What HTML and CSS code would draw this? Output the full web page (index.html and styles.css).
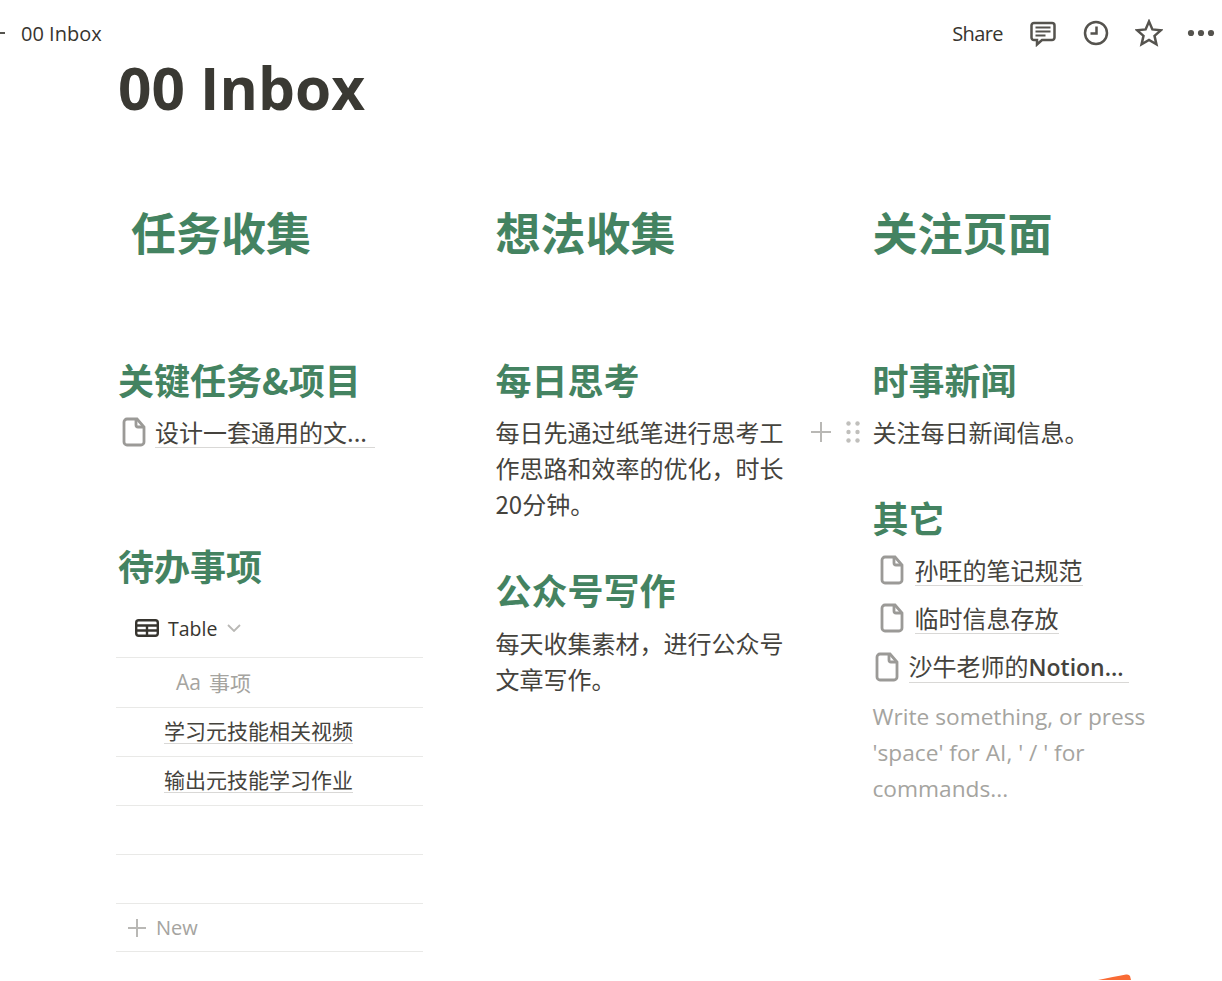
FILE: index.html
```html
<!DOCTYPE html>
<html lang="zh">
<head>
<meta charset="utf-8">
<title>00 Inbox</title>
<link rel="stylesheet" href="styles.css">
</head>
<body>
<header class="topbar">
  <div class="crumb"><span class="toggle"></span><span class="crumb-text">00 Inbox</span></div>
  <div class="actions">
    <span class="share">Share</span>
    <svg class="act act-comment" viewBox="0 0 28 28"><path d="M5 4h18a2.500 2.500 0 0 1 2.500 2.500v12a2.500 2.500 0 0 1-2.500 2.500H13l-5 4.500V21H5a2.500 2.500 0 0 1-2.500-2.500v-12A2.500 2.500 0 0 1 5 4z"/><path d="M6.500 8.500h15M6.500 12.500h15M6.500 16.500h10" class="thin"/></svg>
    <svg class="act act-clock" viewBox="0 0 26 26"><circle cx="13" cy="13" r="11"/><path d="M13.500 6.500v7H7.500"/></svg>
    <svg class="act act-star" viewBox="0 0 28 28"><path d="M14 2.500l3.400 7.900 8.600.8-6.500 5.700 1.900 8.400L14 20.900l-7.400 4.400 1.900-8.400L2 11.200l8.600-.8z"/></svg>
    <svg class="act-more" viewBox="0 0 28 8"><circle cx="4" cy="4" r="3.100"/><circle cx="14" cy="4" r="3.100"/><circle cx="24" cy="4" r="3.100"/></svg>
  </div>
</header>
<main class="page">
  <h1 class="title">00 Inbox</h1>
  <div class="columns">
    <section class="col col-one">
      <h2 class="big indent">任务收集</h2>
      <h3 class="sub first">关键任务&amp;项目</h3>
      <div class="page-link link-a">
        <svg class="doc" viewBox="0 0 24 30"><path d="M5 2h10l7 8v15a3 3 0 0 1-3 3H5a3 3 0 0 1-3-3V5a3 3 0 0 1 3-3z"/><path d="M14 2v6a2 2 0 0 0 2 2h6"/></svg>
        <span class="link-text pad">设计一套通用的文...</span>
      </div>
      <h3 class="sub todo">待办事项</h3>
      <div class="db-view">
        <svg class="table-icon" viewBox="0 0 24 18"><rect x="1.200" y="1.200" width="21.600" height="15.600" rx="2.500"/><path d="M1 6.500h22M1 11.500h22M12 6.500V17"/></svg>
        <span class="view-name">Table</span>
        <svg class="chev" viewBox="0 0 14 8"><path d="M1 1l6 6 6-6"/></svg>
      </div>
      <div class="table">
        <div class="row head"><span class="aa">Aa</span><span>事项</span></div>
        <div class="row"><span class="cell">学习元技能相关视频</span></div>
        <div class="row"><span class="cell">输出元技能学习作业</span></div>
        <div class="row"></div>
        <div class="row"></div>
        <div class="row new">
          <svg class="plus" viewBox="0 0 18 18"><path d="M9 0v18M0 9h18"/></svg>
          <span>New</span>
        </div>
      </div>
    </section>
    <section class="col col-two">
      <h2 class="big">想法收集</h2>
      <h3 class="sub first">每日思考</h3>
      <p class="text">每日先通过纸笔进行思考工作思路和效率的优化，时长20分钟。</p>
      <h3 class="sub second">公众号写作</h3>
      <p class="text">每天收集素材，进行公众号文章写作。</p>
    </section>
    <section class="col col-three">
      <h2 class="big">关注页面</h2>
      <h3 class="sub first">时事新闻</h3>
      <div class="hover-wrap">
        <div class="handles">
          <svg class="plus hover-plus" viewBox="0 0 20 20"><path d="M10 0v20M0 10h20"/></svg>
          <svg class="grip" viewBox="0 0 14 22"><circle cx="2.500" cy="2.500" r="2.200"/><circle cx="11.500" cy="2.500" r="2.200"/><circle cx="2.500" cy="11" r="2.200"/><circle cx="11.500" cy="11" r="2.200"/><circle cx="2.500" cy="19.500" r="2.200"/><circle cx="11.500" cy="19.500" r="2.200"/></svg>
        </div>
        <p class="text">关注每日新闻信息。</p>
      </div>
      <h3 class="sub other">其它</h3>
      <div class="page-link link-b link-first">
        <svg class="doc" viewBox="0 0 24 30"><path d="M5 2h10l7 8v15a3 3 0 0 1-3 3H5a3 3 0 0 1-3-3V5a3 3 0 0 1 3-3z"/><path d="M14 2v6a2 2 0 0 0 2 2h6"/></svg>
        <span class="link-text">孙旺的笔记规范</span>
      </div>
      <div class="page-link link-b">
        <svg class="doc" viewBox="0 0 24 30"><path d="M5 2h10l7 8v15a3 3 0 0 1-3 3H5a3 3 0 0 1-3-3V5a3 3 0 0 1 3-3z"/><path d="M14 2v6a2 2 0 0 0 2 2h6"/></svg>
        <span class="link-text">临时信息存放</span>
      </div>
      <div class="page-link link-c">
        <svg class="doc" viewBox="0 0 24 30"><path d="M5 2h10l7 8v15a3 3 0 0 1-3 3H5a3 3 0 0 1-3-3V5a3 3 0 0 1 3-3z"/><path d="M14 2v6a2 2 0 0 0 2 2h6"/></svg>
        <span class="link-text pad-small">沙牛老师的<b>Notion...</b></span>
      </div>
      <p class="text placeholder">Write something, or press 'space' for AI, ' / ' for commands...</p>
    </section>
  </div>
</main>
<svg class="corner" viewBox="0 0 36 8"><path d="M0 7C10 5 20 3 28 1.500Q31 1 32 3L33 7z"/></svg>
</body>
</html>
```

FILE: styles.css
```css
* { box-sizing: border-box; }
html, body { margin: 0; height: 981px; overflow: hidden; background: #fff; }
body {
  position: relative;
  color: #37352f;
  font-family: "Open Sans", "Noto Sans CJK SC", sans-serif;
}
.topbar {
  height: 66px;
  display: flex;
  justify-content: space-between;
  align-items: center;
  padding-right: 7px;
}
.crumb { display: flex; align-items: center; }
.toggle { width: 5px; height: 2px; background: #55534e; }
.crumb-text { margin-left: 16px; font-size: 20px; }
.actions { display: flex; align-items: center; }
.share { font-size: 20px; letter-spacing: -0.6px; margin-right: 26px; }
.act { fill: none; stroke: #55534e; stroke-width: 2.500; }
.act .thin { stroke-width: 2; }
.act-comment { width: 28px; height: 28px; margin-right: 26px; }
.act-clock { width: 26px; height: 26px; margin-right: 26px; }
.act-star { width: 28px; height: 28px; margin-right: 24px; }
.act-more { width: 28px; height: 8px; fill: #55534e; }

.page { padding-left: 116px; }
.title {
  margin: -8px 0 0;
  padding-left: 2px;
  font-size: 58.500px;
  line-height: 58px;
  font-weight: 700;
  color: #3a3933;
}
.columns { display: grid; grid-template-columns: 379.500px 377px 1fr; margin-top: 88px; }
.col-one { width: 307px; }
.big {
  margin: 0;
  font-size: 45px;
  line-height: 56px;
  font-weight: 700;
  color: #448361;
  font-family: "Noto Sans CJK SC", sans-serif;
}
.indent { padding-left: 15px; }
.sub {
  margin: 0;
  font-size: 36px;
  line-height: 46px;
  font-weight: 700;
  color: #448361;
  font-family: "Noto Sans CJK SC", sans-serif;
}
.col-one .sub { padding-left: 2px; }
.first { margin-top: 96px; }
.todo { margin-top: 86px; }
.second { margin-top: 44px; }
.other { margin-top: 44px; }
.text {
  margin: 12px 0 0;
  width: 289px;
  font-size: 24px;
  line-height: 36px;
  font-family: "Noto Sans CJK SC", sans-serif;
  color: #45433d;
}
.second + .text { margin-top: 13px; }
.page-link {
  display: flex;
  align-items: center;
  height: 48px;
  font-size: 24px;
  font-family: "Noto Sans CJK SC", sans-serif;
  color: #45433d;
}
.doc { width: 24px; height: 30px; fill: none; stroke: #9b9a97; stroke-width: 2.800; flex: none; }
.link-text {
  line-height: 30px;
  border-bottom: 1px solid #d9d8d6;
}
.link-text b { font-family: "Open Sans", sans-serif; font-weight: 600; font-size: 23px; }
.pad { padding-right: 8px; }
.pad-small { padding-right: 5px; }
.link-a { margin-top: 6px; padding-left: 6px; gap: 9px; }
.link-b { padding-left: 7px; gap: 11px; }
.link-c { padding-left: 2px; padding-top: 2px; gap: 10px; }
.link-first { margin-top: 6px; }
.db-view { display: flex; align-items: center; height: 44px; margin-top: 18px; padding-left: 19px; }
.table-icon { width: 24px; height: 18px; fill: none; stroke: #37352f; stroke-width: 2.400; }
.view-name { margin-left: 9px; font-size: 19.500px; font-weight: 500; }
.chev { width: 14px; height: 8px; margin-left: 10px; fill: none; stroke: #b9b8b5; stroke-width: 1.800; }
.table { margin-top: 7px; border-top: 1px solid #e9e9e7; }
.row {
  height: 49px;
  display: flex;
  align-items: center;
  border-bottom: 1px solid #e9e9e7;
  padding-left: 48px;
  padding-bottom: 3px;
  font-size: 21px;
  font-family: "Noto Sans CJK SC", sans-serif;
  color: #45433d;
}
.cell { line-height: 26px; border-bottom: 1px solid #d9d8d6; }
.head { height: 50px; padding-left: 60px; padding-bottom: 2px; color: #a5a4a0; }
.aa { font-family: "Open Sans", sans-serif; margin-right: 8px; font-size: 21px; }
.new { height: 48px; padding-left: 12px; padding-bottom: 0; color: #a5a4a0; font-family: "Open Sans", sans-serif; font-size: 20px; }
.plus { fill: none; stroke: #b9b8b5; stroke-width: 2; }
.new .plus { width: 18px; height: 18px; margin-right: 10px; }
.hover-wrap { position: relative; }
.handles {
  position: absolute;
  left: -61.500px;
  top: 0;
  height: 36px;
  display: flex;
  align-items: center;
}
.hover-plus { width: 20px; height: 20px; margin-right: 15px; }
.grip { width: 14px; height: 22px; fill: #c0bfbc; }
.text.placeholder {
  margin-top: 9px;
  width: 290px;
  font-size: 22.700px;
  color: #a5a4a0;
  font-family: "Open Sans", sans-serif;
}
.corner { position: absolute; left: 1098px; top: 973px; width: 36px; height: 8px; fill: #f96b35; }
```
